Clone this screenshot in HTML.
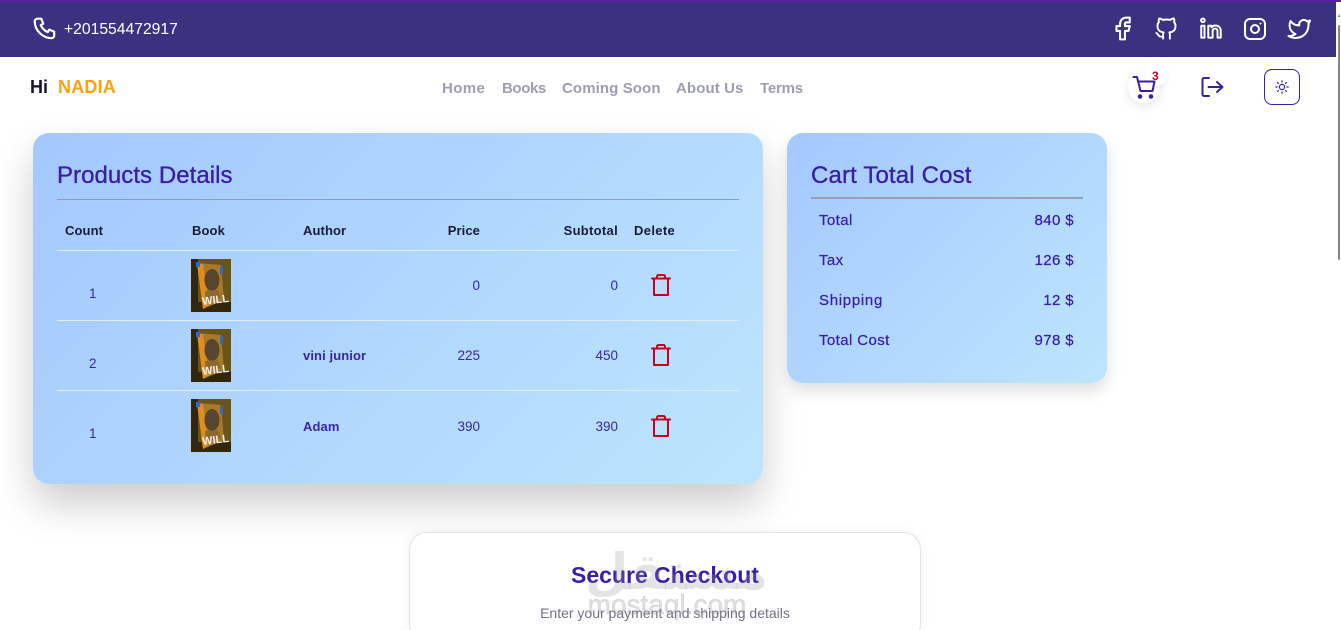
<!DOCTYPE html>
<html lang="en"><head><meta charset="utf-8"><title>Cart</title>
<style>
html,body{margin:0;padding:0;width:1341px;height:630px;overflow:hidden;background:#fff}
body{position:relative;font-family:"Liberation Sans",sans-serif}
.t{position:absolute;white-space:nowrap;line-height:20px;height:20px}
.r{text-align:right}
.top{position:absolute;left:0;top:0;width:1336px;height:57px;background:#3a3281}
.nav{font-size:15px;font-weight:bold;color:#9c9fb0;top:79px}
.card{position:absolute;border-radius:16px;background:linear-gradient(135deg,#a3c8ff,#bde5fd)}
.th{font-size:13px;font-weight:bold;color:#1c1a38;top:221px;letter-spacing:.1px}
.td{font-size:13.5px;color:#3a26a5}
.b{font-weight:bold;font-size:13px;letter-spacing:.1px}
.line{position:absolute;left:57px;width:682px;height:1px;background:#e3ecf5}
.s{font-size:15px;color:#3a1fa3;letter-spacing:.4px;-webkit-text-stroke:.25px #3a1fa3}
.h{font-size:24px;color:#3a1fa3;line-height:22px;-webkit-text-stroke:.35px #3a1fa3}
svg{position:absolute;display:block}
.ic{fill:none;stroke:#fff;stroke-width:2;stroke-linecap:round;stroke-linejoin:round}
.pu{fill:none;stroke:#3a1fa3;stroke-width:2;stroke-linecap:round;stroke-linejoin:round}
.tr{fill:none;stroke:#c8001e;stroke-width:2;stroke-linecap:round;stroke-linejoin:round}
</style></head><body>

<div class="top"></div>
<div style="position:absolute;left:0;top:0;width:1341px;height:2px;background:#5b21a0"></div>
<svg class="ic" style="left:32px;top:16px" width="26" height="26" viewBox="0 0 24 24" stroke-width="1.8"><path d="M5 2.500h3.600l1.800 4.600-2.300 1.400a12.500 12.500 0 0 0 6.400 6.400l1.400-2.300 4.600 1.800V18a2.500 2.500 0 0 1-2.500 2.500A16 16 0 0 1 2.500 5 2.500 2.500 0 0 1 5 2.500z"/></svg>
<div class="t" style="left:64px;top:20px;font-size:15.700px;color:#fff">+201554472917</div>

<svg class="ic" style="left:1108px;top:14px;stroke-width:1.700" width="29" height="29" viewBox="0 0 24 24"><path d="M7 10v4h3v7h4v-7h3l1-4h-4V8a1 1 0 0 1 1-1h3V3h-3a5 5 0 0 0-5 5v2H7z"/></svg>
<svg class="ic" style="left:1153px;top:15px;stroke-width:1.700" width="27" height="27" viewBox="0 0 24 24"><path d="M9 19c-4.300 1.400-4.300-2.500-6-3m12 5v-3.500c0-1 .1-1.400-.5-2 2.800-.3 5.500-1.400 5.500-6a4.600 4.600 0 0 0-1.300-3.200 4.200 4.200 0 0 0-.1-3.200s-1.100-.3-3.500 1.300a12.300 12.300 0 0 0-6.200 0C6.500 2.800 5.400 3.100 5.400 3.100a4.200 4.200 0 0 0-.1 3.200A4.600 4.600 0 0 0 4 9.500c0 4.600 2.700 5.700 5.500 6-.6.600-.6 1.200-.5 2V21"/></svg>
<svg class="ic" style="left:1198px;top:16px;stroke-width:1.800" width="26" height="26" viewBox="0 0 24 24"><circle cx="4.500" cy="4" r="1.700"/><path d="M3 9h3v11H3zM9.500 20V9h3v1.500a4.200 4.200 0 0 1 3.500-1.700c3 0 5 2 5 5.200v6h-3v-6c0-1.400-.8-2.400-2.200-2.400s-2.300 1-2.300 2.400v6z"/></svg>
<svg class="ic" style="left:1243px;top:17px" width="24" height="24" viewBox="0 0 24 24"><rect x="2" y="2" width="20" height="20" rx="5"/><circle cx="12" cy="12" r="4"/><path d="M17.500 6.500h.01"/></svg>
<svg class="ic" style="left:1287px;top:17px" width="24" height="24" viewBox="0 0 24 24"><path d="M23 3.500c-1 .5-2 .8-3 .9a4.500 4.500 0 0 0-7.800 3v1A10.500 10.500 0 0 1 3.500 4S-.5 13 8.500 17c-2 1.400-4.500 2.200-7 2 9 5 20 0 20-11.500 0-.3 0-.5-.1-.8A7.700 7.700 0 0 0 23 3.500z"/></svg>

<div class="t" style="left:30px;top:77px;font-size:18px;font-weight:bold;color:#17132e">Hi</div>
<div class="t" style="left:58px;top:77px;font-size:18px;font-weight:bold;color:#f8a212;letter-spacing:.2px">NADIA</div>

<div class="t nav" style="left:442px;letter-spacing:.4px">Home</div>
<div class="t nav" style="left:502px;letter-spacing:-.4px">Books</div>
<div class="t nav" style="left:562px;letter-spacing:.1px">Coming Soon</div>
<div class="t nav" style="left:676px;letter-spacing:.1px">About Us</div>
<div class="t nav" style="left:760px;letter-spacing:-.2px">Terms</div>

<div style="position:absolute;left:1128px;top:71px;width:32px;height:32px;border-radius:50%;background:#fff;box-shadow:0 3px 10px rgba(0,0,0,.1)"></div>
<div style="position:absolute;left:1144px;top:62px;width:24px;height:24px;border-radius:50%;background:#fff;box-shadow:0 2px 6px rgba(0,0,0,.06)"></div>
<svg class="pu" style="left:1132px;top:75px" width="25" height="25" viewBox="0 0 25 25"><path d="M1.500 2h3.500l3.500 14h12l2-9.500H6.500"/><circle cx="8" cy="21.500" r="1.300" fill="#3a1fa3"/><circle cx="19" cy="21.500" r="1.300" fill="#3a1fa3"/></svg>
<div class="t" style="left:1152px;top:66px;font-size:12px;font-weight:bold;color:#c8001e">3</div>

<svg class="pu" style="left:1201px;top:76px" width="23" height="22" viewBox="0 0 23 22"><path d="M8 2H3a1.500 1.500 0 0 0-1.500 1.500v15A1.500 1.500 0 0 0 3 20h5M7.500 11h14M16 6l5.500 5-5.500 5"/></svg>

<div style="position:absolute;left:1264px;top:69px;width:36px;height:36px;box-sizing:border-box;border:1px solid #3a1fa3;border-radius:8px"></div>
<svg class="pu" style="left:1274px;top:79px;stroke-width:1.200" width="16" height="16" viewBox="0 0 16 16"><circle cx="8" cy="8" r="2.600"/><path d="M8 1.800v1.200M8 13v1.200M1.800 8H3M13 8h1.200M3.600 3.600l.8.8M11.600 11.600l.8.8M3.600 12.400l.8-.8M11.600 4.400l.8-.8"/></svg>

<div style="position:absolute;left:1338px;top:25px;width:2px;height:235px;background:#8b8685;border-radius:1px"></div>
<div style="position:absolute;left:1338px;top:14px;width:0;height:0;border-left:1.500px solid transparent;border-right:1.500px solid transparent;border-bottom:3px solid #777"></div>

<!-- Products card -->
<div class="card" style="left:33px;top:133px;width:730px;height:351px;box-shadow:0 20px 40px rgba(0,0,0,.2)"></div>
<div class="t h" style="left:57px;top:165px;letter-spacing:.05px">Products Details</div>
<div style="position:absolute;left:57px;top:199px;width:682px;height:1px;background:#8f9cb8"></div>

<div class="t th" style="left:65px">Count</div>
<div class="t th" style="left:192px">Book</div>
<div class="t th" style="left:303px">Author</div>
<div class="t th r" style="left:420px;width:60px">Price</div>
<div class="t th r" style="left:538px;width:80px;letter-spacing:.3px">Subtotal</div>
<div class="t th" style="left:634px;letter-spacing:.35px">Delete</div>

<div class="line" style="top:250px"></div>
<div class="line" style="top:320px"></div>
<div class="line" style="top:390px"></div>

<div class="t td" style="left:89px;top:284px">1</div>
<div class="t td" style="left:89px;top:354px">2</div>
<div class="t td" style="left:89px;top:424px">1</div>

<svg style="left:191px;top:259px" width="40" height="53" viewBox="0 0 40 53"><rect width="40" height="53" fill="#6a5418"/><rect width="7" height="53" fill="#33270b"/><rect y="43" width="40" height="10" fill="#33270b"/><path d="M6 4L30 6 33 41 12 50z" fill="#a9792a"/><path d="M6 4l6 1 6 41-6 4z" fill="#e08c1e"/><ellipse cx="21" cy="21" rx="7.500" ry="11" fill="#57462e"/><path d="M14 32l13-1 3 8-15 3z" fill="#8d6a2c"/><path d="M5 3h4v5H5zM29 7h3v8h-3z" fill="#3767c4"/><text x="11" y="45" font-size="11" font-weight="bold" fill="#eef0f4" font-family="Liberation Sans" transform="rotate(-7 20 40)">WILL</text></svg>
<svg style="left:191px;top:329px" width="40" height="53" viewBox="0 0 40 53"><rect width="40" height="53" fill="#6a5418"/><rect width="7" height="53" fill="#33270b"/><rect y="43" width="40" height="10" fill="#33270b"/><path d="M6 4L30 6 33 41 12 50z" fill="#a9792a"/><path d="M6 4l6 1 6 41-6 4z" fill="#e08c1e"/><ellipse cx="21" cy="21" rx="7.500" ry="11" fill="#57462e"/><path d="M14 32l13-1 3 8-15 3z" fill="#8d6a2c"/><path d="M5 3h4v5H5zM29 7h3v8h-3z" fill="#3767c4"/><text x="11" y="45" font-size="11" font-weight="bold" fill="#eef0f4" font-family="Liberation Sans" transform="rotate(-7 20 40)">WILL</text></svg>
<svg style="left:191px;top:399px" width="40" height="53" viewBox="0 0 40 53"><rect width="40" height="53" fill="#6a5418"/><rect width="7" height="53" fill="#33270b"/><rect y="43" width="40" height="10" fill="#33270b"/><path d="M6 4L30 6 33 41 12 50z" fill="#a9792a"/><path d="M6 4l6 1 6 41-6 4z" fill="#e08c1e"/><ellipse cx="21" cy="21" rx="7.500" ry="11" fill="#57462e"/><path d="M14 32l13-1 3 8-15 3z" fill="#8d6a2c"/><path d="M5 3h4v5H5zM29 7h3v8h-3z" fill="#3767c4"/><text x="11" y="45" font-size="11" font-weight="bold" fill="#eef0f4" font-family="Liberation Sans" transform="rotate(-7 20 40)">WILL</text></svg>

<div class="t td b" style="left:303px;top:346px">vini junior</div>
<div class="t td b" style="left:303px;top:417px">Adam</div>

<div class="t td r" style="left:420px;width:60px;top:276px">0</div>
<div class="t td r" style="left:420px;width:60px;top:346px">225</div>
<div class="t td r" style="left:420px;width:60px;top:417px">390</div>
<div class="t td r" style="left:558px;width:60px;top:276px">0</div>
<div class="t td r" style="left:558px;width:60px;top:346px">450</div>
<div class="t td r" style="left:558px;width:60px;top:417px">390</div>

<svg class="tr" style="left:651px;top:274px" width="20" height="22" viewBox="0 0 20 22"><path d="M1 4.500h18M3 4.500V21h14V4.500M6 4.500V2.500a1.500 1.500 0 0 1 1.500-1.500h5a1.500 1.500 0 0 1 1.500 1.500v2"/></svg>
<svg class="tr" style="left:651px;top:344px" width="20" height="22" viewBox="0 0 20 22"><path d="M1 4.500h18M3 4.500V21h14V4.500M6 4.500V2.500a1.500 1.500 0 0 1 1.500-1.500h5a1.500 1.500 0 0 1 1.500 1.500v2"/></svg>
<svg class="tr" style="left:651px;top:415px" width="20" height="22" viewBox="0 0 20 22"><path d="M1 4.500h18M3 4.500V21h14V4.500M6 4.500V2.500a1.500 1.500 0 0 1 1.500-1.500h5a1.500 1.500 0 0 1 1.500 1.500v2"/></svg>

<!-- Cart total card -->
<div class="card" style="left:787px;top:133px;width:320px;height:250px;box-shadow:0 8px 16px rgba(0,0,0,.13)"></div>
<div class="t h" style="left:811px;top:165px;letter-spacing:.15px">Cart Total Cost</div>
<div style="position:absolute;left:811px;top:197px;width:272px;height:2px;background:#9a9db4"></div>
<div class="t s" style="left:819px;top:211px">Total</div>
<div class="t s" style="left:819px;top:251px">Tax</div>
<div class="t s" style="left:819px;top:291px;letter-spacing:.7px">Shipping</div>
<div class="t s" style="left:819px;top:331px">Total Cost</div>
<div class="t s r" style="left:994px;width:80px;top:211px">840 $</div>
<div class="t s r" style="left:994px;width:80px;top:251px">126 $</div>
<div class="t s r" style="left:994px;width:80px;top:291px">12 $</div>
<div class="t s r" style="left:994px;width:80px;top:331px">978 $</div>

<!-- Checkout -->
<div style="position:absolute;left:409px;top:532px;width:512px;height:110px;box-sizing:border-box;border:1px solid #e4e4e8;border-radius:18px;background:#fff;box-shadow:0 0 12px rgba(0,0,0,.05)"></div>
<div class="t" style="left:409px;width:512px;top:565px;text-align:center;font-size:23px;font-weight:bold;color:#3a1fa3">Secure Checkout</div>
<div class="t" style="left:409px;width:512px;top:603px;text-align:center;font-size:14px;color:#6f7280">Enter your payment and shipping details</div>

<div class="t" style="left:585px;width:165px;top:552px;height:40px;line-height:40px;text-align:center;font-size:50px;font-weight:bold;color:rgba(150,150,150,.26);font-family:'DejaVu Sans',sans-serif">مستقل</div>
<div class="t" style="left:567px;width:200px;top:595px;text-align:center;font-size:28px;line-height:20px;color:rgba(150,150,150,.3);-webkit-text-stroke:.5px rgba(150,150,150,.3)">mostaql.com</div>

</body></html>
